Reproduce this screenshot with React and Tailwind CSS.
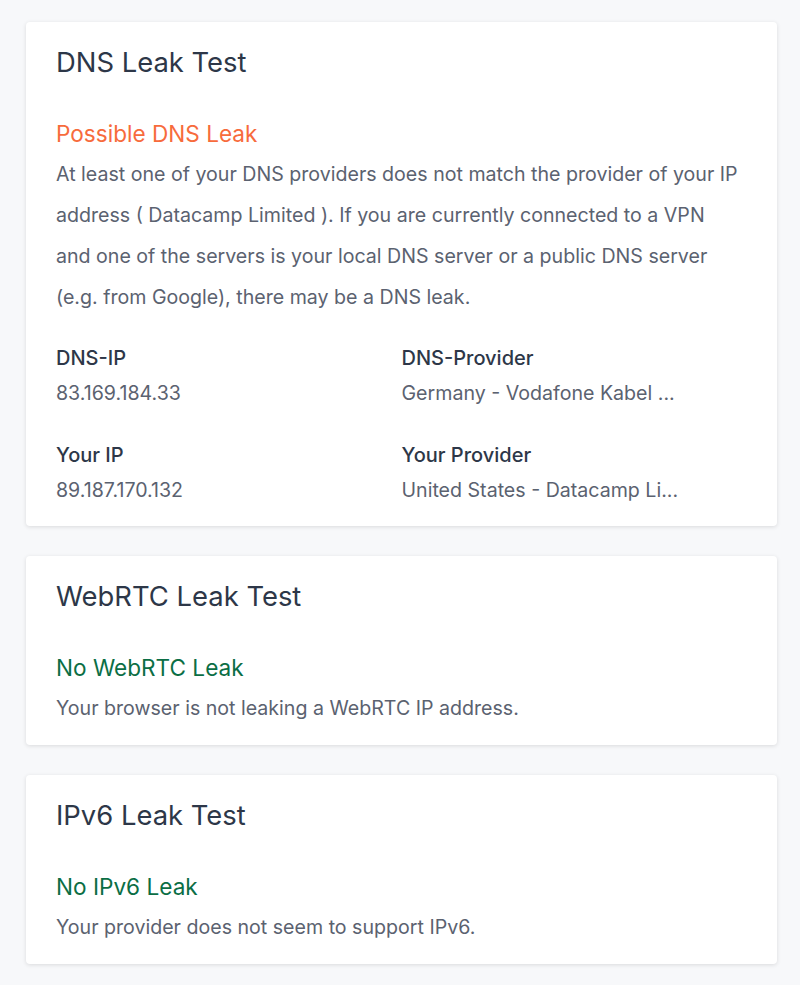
const Card = ({ title, children, pb = 'pb-[16px]' }) => (
  <div className={`bg-white rounded-[4px] shadow-[0_1px_4px_rgba(0,0,0,0.12)] px-[30px] pt-[22px] ${pb}`}>
    <h2 className="text-[27.4px] leading-[36px] text-[#2d3748]">{title}</h2>
    {children}
  </div>
);

const Field = ({ label, value }) => (
  <div>
    <div className="text-[20px] leading-[28px] font-medium text-[#2d3748]">{label}</div>
    <div className="pt-px text-[19.6px] leading-[41px] text-[#5b6270]">{value}</div>
  </div>
);

export default function App() {
  return (
    <div className="min-h-screen bg-[#f7f8fa] pt-[22px] pb-[20px] font-['Inter',sans-serif]">
      <div className="ml-[26px] w-[751px] flex flex-col gap-[30px]">
        <Card title="DNS Leak Test" pb="pb-[15px]">
          <h3 className="mt-[33px] text-[22.6px] leading-[41px] text-[#f76b3c]">Possible DNS Leak</h3>
          <p className="pr-[6px] text-[19.6px] leading-[41px] text-[#5b6270]">
            At least one of your DNS providers does not match the provider of your IP address ( Datacamp Limited ). If you are currently connected to a VPN and one of the servers is your local DNS server or a public DNS server (e.g. from Google), there may be a DNS leak.
          </p>
          <div className="mt-[26px] grid grid-cols-2 gap-y-[27px]">
            <Field label="DNS-IP" value="83.169.184.33" />
            <Field label="DNS-Provider" value="Germany - Vodafone Kabel ..." />
            <Field label="Your IP" value="89.187.170.132" />
            <Field label="Your Provider" value="United States - Datacamp Li..." />
          </div>
        </Card>
        <Card title="WebRTC Leak Test">
          <h3 className="mt-[33px] text-[22.6px] leading-[41px] text-[#0b6e45]">No WebRTC Leak</h3>
          <p className="text-[19.6px] leading-[41px] text-[#5b6270]">Your browser is not leaking a WebRTC IP address.</p>
        </Card>
        <Card title="IPv6 Leak Test">
          <h3 className="mt-[33px] text-[22.6px] leading-[41px] text-[#0b6e45]">No IPv6 Leak</h3>
          <p className="text-[19.6px] leading-[41px] text-[#5b6270]">Your provider does not seem to support IPv6.</p>
        </Card>
      </div>
    </div>
  );
}
